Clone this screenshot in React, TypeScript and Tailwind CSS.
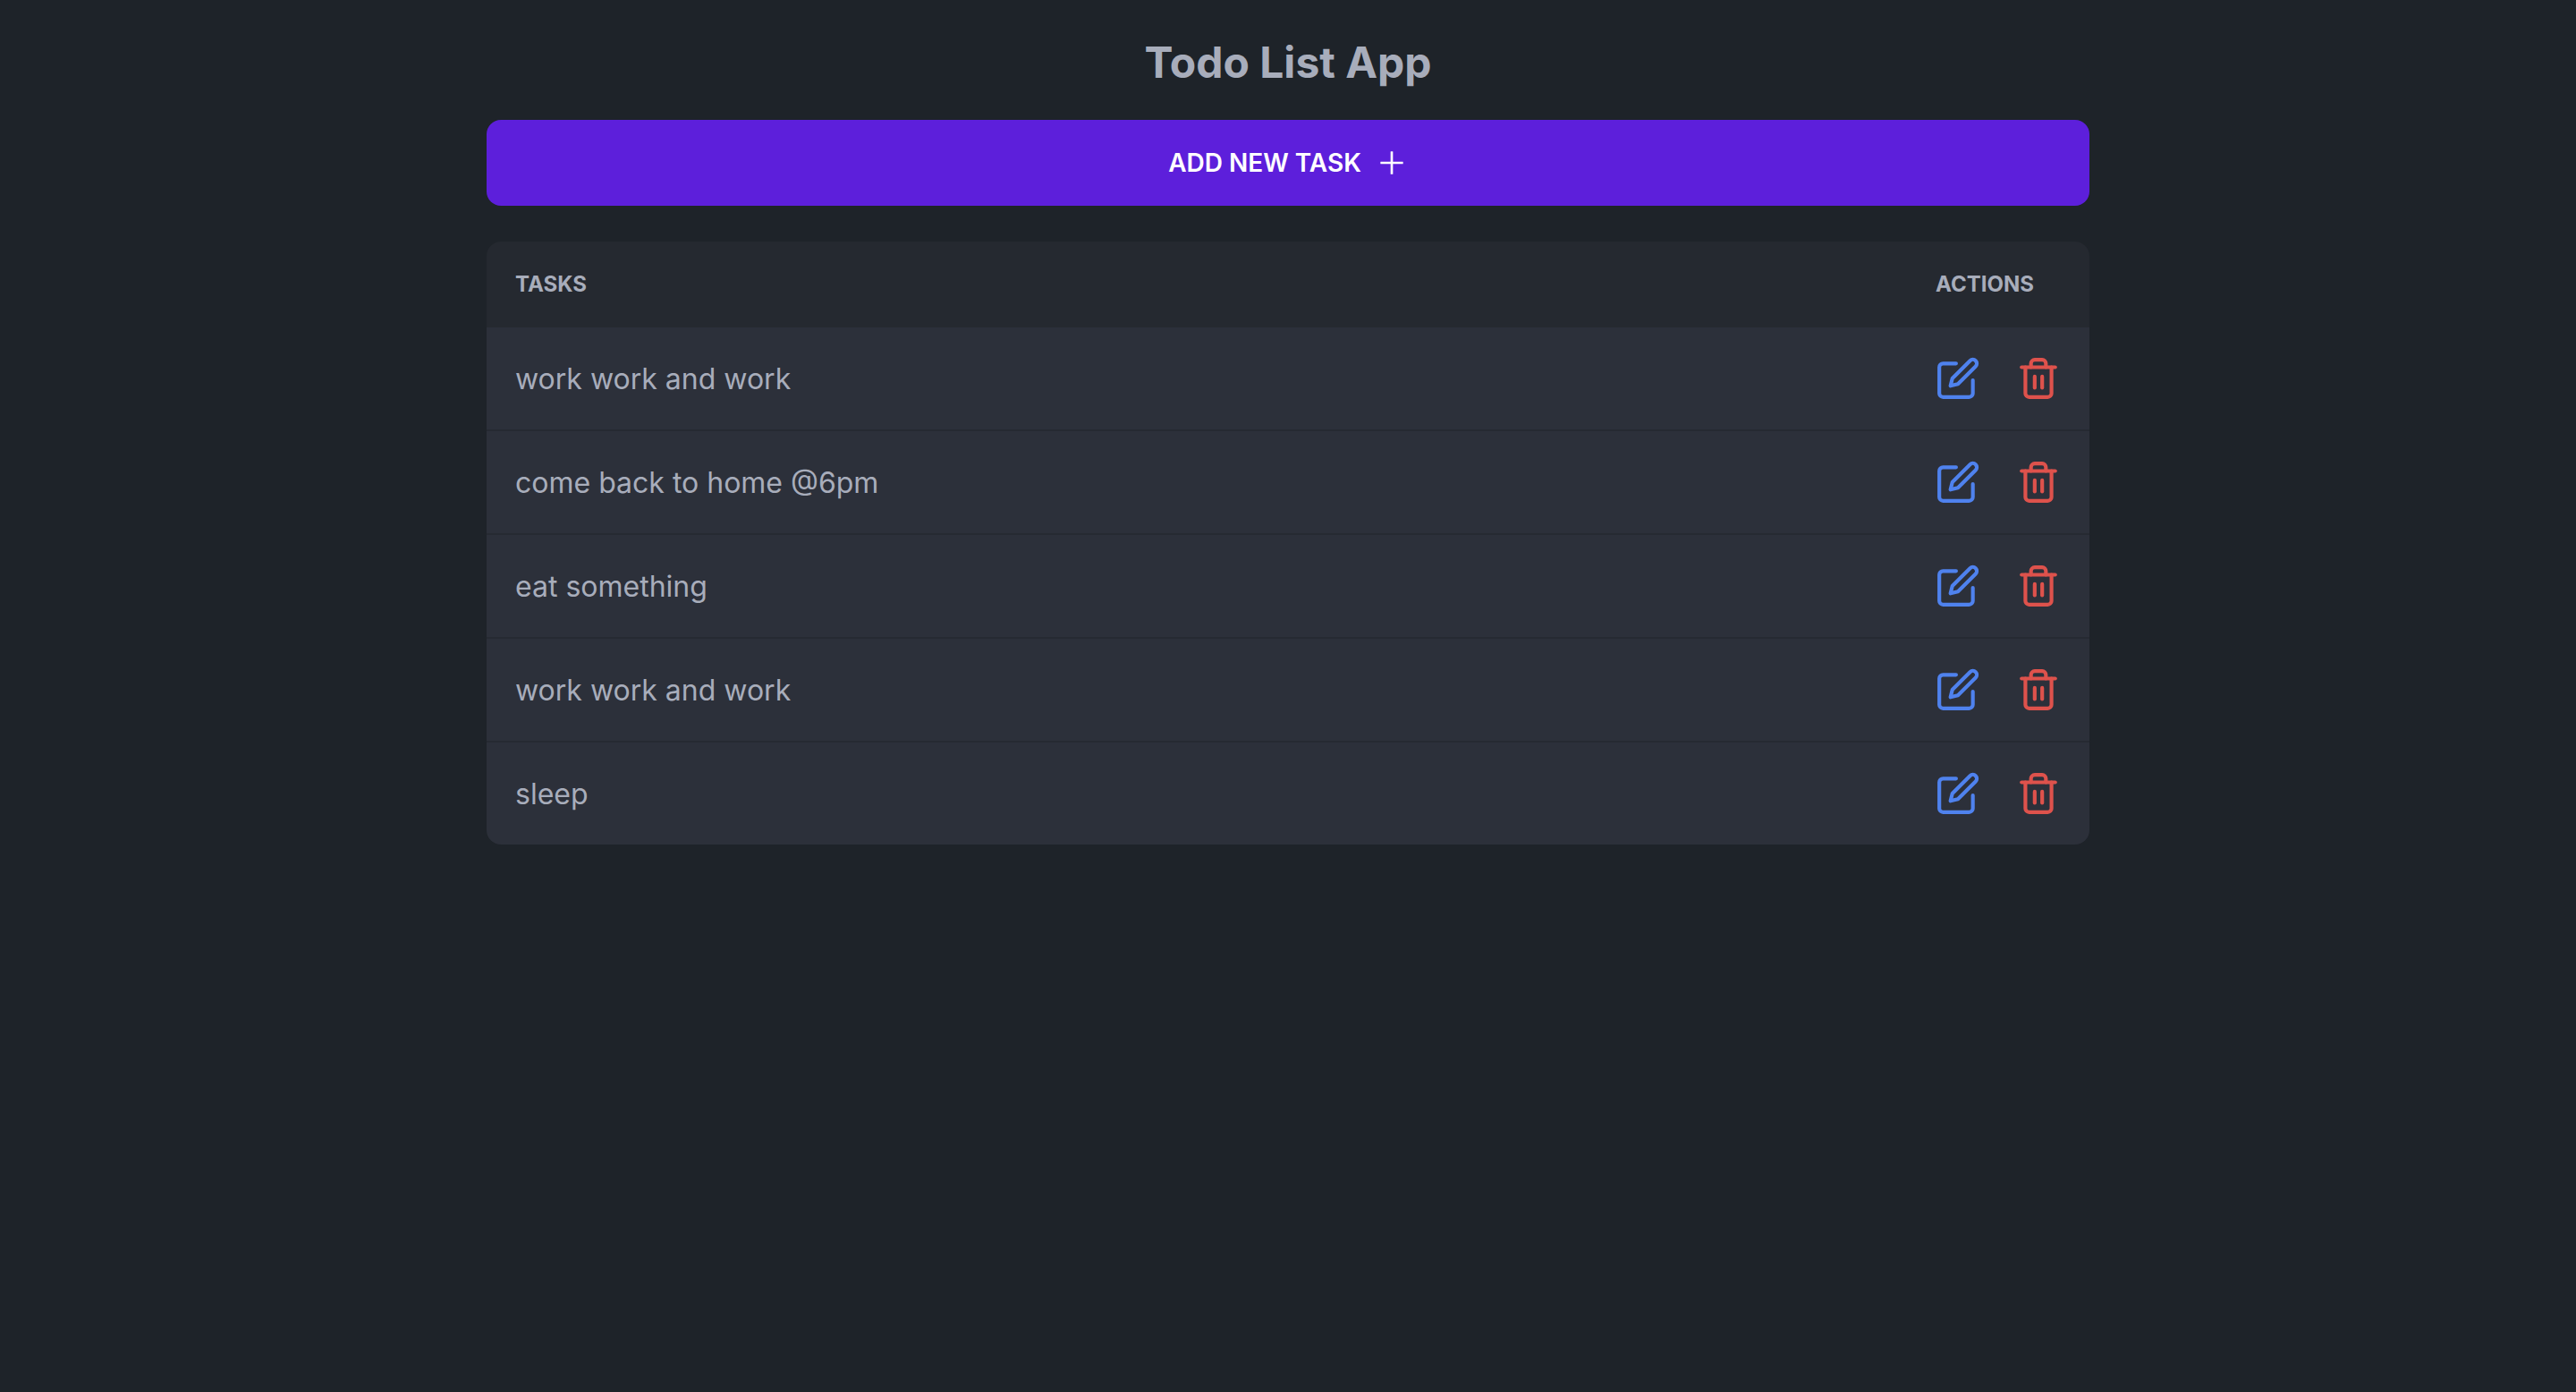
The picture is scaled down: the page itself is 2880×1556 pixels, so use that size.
import { FiEdit, FiTrash2 } from "react-icons/fi";
import { AiOutlinePlus } from "react-icons/ai";

const tasks = [
  "work work and work",
  "come back to home @6pm",
  "eat something",
  "work work and work",
  "sleep",
];

function TaskRow({ task, last }: { task: string; last: boolean }) {
  const cell = last ? "h-[114px] px-8" : "h-[116px] border-b-2 border-[#262a32] px-8";
  return (
    <tr>
      <td className={`${cell} pt-0.5`}>{task}</td>
      <td className={cell}>
        <div className="flex items-center gap-10">
          <button type="button" aria-label={`Edit ${task}`} className="text-[#4f82ee]">
            <FiEdit className="size-[50px]" />
          </button>
          <button type="button" aria-label={`Delete ${task}`} className="text-[#de524c]">
            <FiTrash2 className="size-[50px]" />
          </button>
        </div>
      </td>
    </tr>
  );
}

export default function App() {
  return (
    <div className="min-h-screen bg-[#1e2329] font-['Inter',sans-serif] text-[#a8adbb]">
      <main className="mx-auto max-w-[1792px] pt-8">
        <h1 className="text-center text-5xl leading-[76px] font-bold">Todo List App</h1>
        <button
          type="button"
          className="mt-[26px] flex h-24 w-full items-center justify-center gap-4 rounded-2xl bg-[#5d1fdb] text-[28px] font-semibold text-white uppercase"
        >
          Add new task
          <AiOutlinePlus className="size-9" aria-hidden />
        </button>
        <div className="mt-10 overflow-hidden rounded-2xl">
          <table className="w-full border-separate border-spacing-0 text-left">
            <thead className="bg-[#252930] text-2xl font-bold uppercase">
              <tr className="h-24">
                <th scope="col" className="px-8">Tasks</th>
                <th scope="col" className="w-[204px] px-8">Actions</th>
              </tr>
            </thead>
            <tbody className="bg-[#2c303a] text-[32px]">
              {tasks.map((task, i) => (
                <TaskRow key={i} task={task} last={i === tasks.length - 1} />
              ))}
            </tbody>
          </table>
        </div>
      </main>
    </div>
  );
}
